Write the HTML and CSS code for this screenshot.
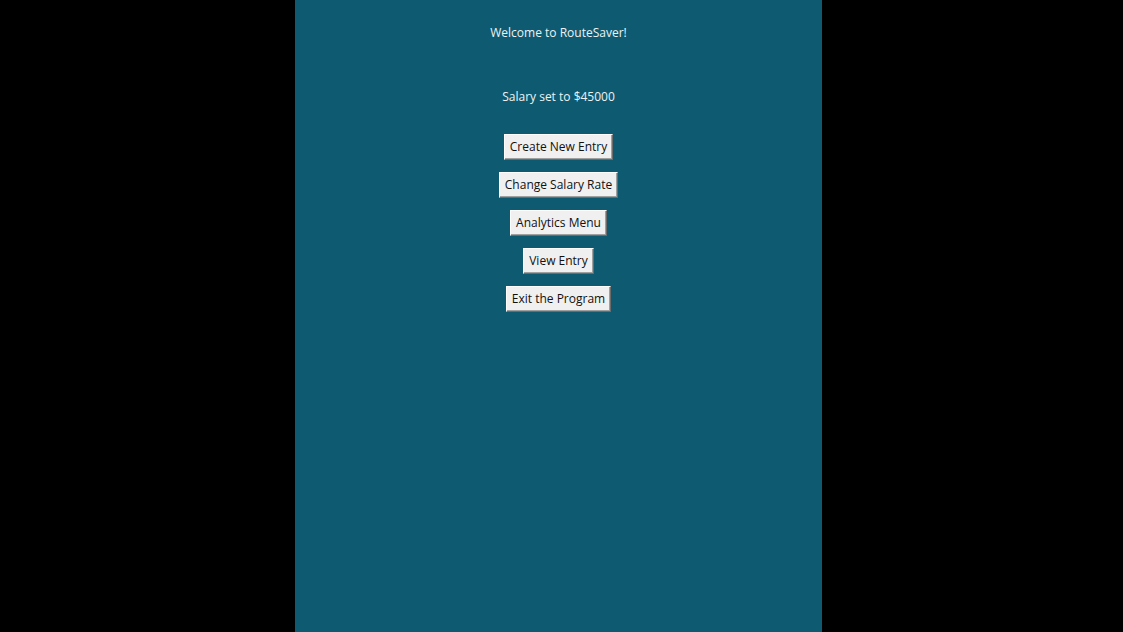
FILE: index.html
```html
<!DOCTYPE html>
<html>
<head>
<meta charset="utf-8">
<link rel="stylesheet" href="styles.css">
<title>RouteSaver</title>
</head>
<body>
<div class="stage">
  <main class="panel">
    <div class="title">Welcome to RouteSaver!</div>
    <div class="status">Salary set to $45000</div>
    <div class="menu">
      <button class="btn">Create New Entry</button>
      <button class="btn">Change Salary Rate</button>
      <button class="btn">Analytics Menu</button>
      <button class="btn">View Entry</button>
      <button class="btn">Exit the Program</button>
    </div>
  </main>
</div>
</body>
</html>
```
FILE: styles.css
```css
html, body {
  margin: 0;
  padding: 0;
  background: #000;
  height: 100%;
}
.stage {
  display: flex;
  justify-content: flex-start;
  height: 632px;
  padding-left: 295px;
}
.panel {
  width: 527px;
  height: 632px;
  background: #0d5a71;
  display: flex;
  flex-direction: column;
  align-items: center;
  font-family: "Open Sans", "Noto Sans", sans-serif;
  font-size: 12px;
  color: #eef2f3;
}
.title {
  margin-top: 25px;
  line-height: 16px;
}
.status {
  margin-top: 48px;
  line-height: 16px;
}
.menu {
  margin-top: 29px;
  display: flex;
  flex-direction: column;
  align-items: center;
  gap: 12px;
}
.btn {
  font-family: "Open Sans", "Noto Sans", sans-serif;
  font-size: 12px;
  height: 26px;
  padding: 0 5px;
  background: #f0f0f0;
  color: #111;
  border: 1px solid;
  border-color: #ffffff #6b6b6b #6b6b6b #ffffff;
  box-shadow: inset -1px -1px 0 #a0a0a0;
  border-radius: 0;
  line-height: 22px;
}
```
